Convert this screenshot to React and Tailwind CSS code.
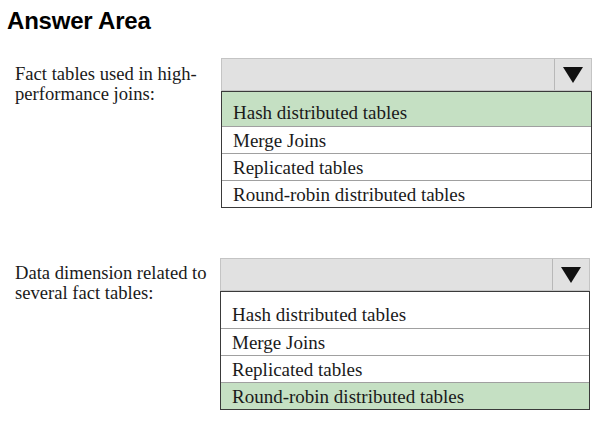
import React from "react";

const options = [
  "Hash distributed tables",
  "Merge Joins",
  "Replicated tables",
  "Round-robin distributed tables",
];

const Arrow = () => (
  <svg width="20" height="16" viewBox="0 0 20 16">
    <polygon points="0,0 20,0 10,16" fill="#111" />
  </svg>
);

const DropDown = ({ width, selected, firstPad }) => {
  return (
    <div className={width}>
      <div className="flex h-[33px] bg-[#e1e1e1] border border-[#c4c4c4]">
        <div className="flex-1" />
        <div className="w-[37px] border-l border-[#b8b8b8] flex items-center justify-center">
          <Arrow />
        </div>
      </div>
      <div className="border border-[#3a3a3a] bg-white">
        {options.map((opt, i) => (
          <div
            key={opt}
            className={
              (i === selected ? "bg-[#c5e0c3] " : "bg-white ") +
              (i > 0 ? "border-t border-[#a0a0a0] " : "") +
              "pl-[11px] h-[27px] leading-[27px]"
            }
            style={i === 0 ? { paddingTop: firstPad, height: 27 + firstPad } : undefined}
          >
            {opt}
          </div>
        ))}
      </div>
    </div>
  );
};

export default function App() {
  return (
    <div className="w-[609px] h-[430px] bg-white text-[#1a1a1a] overflow-hidden">
      <h1 className="pt-[7px] pl-[7px] text-[24px] leading-[28px] font-bold font-['Liberation_Sans',Arial,sans-serif] text-black tracking-[-0.2px]">
        Answer Area
      </h1>

      <div className="font-['Liberation_Serif','Times_New_Roman',serif] text-[19px]">
        <div className="flex mt-[23px] pl-[15px]">
          <div className="w-[206px] mt-[6px] leading-[20px] text-[18.6px]">
            Fact tables used in high-
            <br />
            performance joins:
          </div>
          <DropDown width="w-[371px]" selected={0} firstPad={7} />
        </div>

        <div className="flex mt-[50px] pl-[15px]">
          <div className="w-[205px] mt-[5px] leading-[20px] text-[18.6px]">
            Data dimension related to
            <br />
            several fact tables:
          </div>
          <DropDown width="w-[370px]" selected={3} firstPad={9} />
        </div>
      </div>
    </div>
  );
}
